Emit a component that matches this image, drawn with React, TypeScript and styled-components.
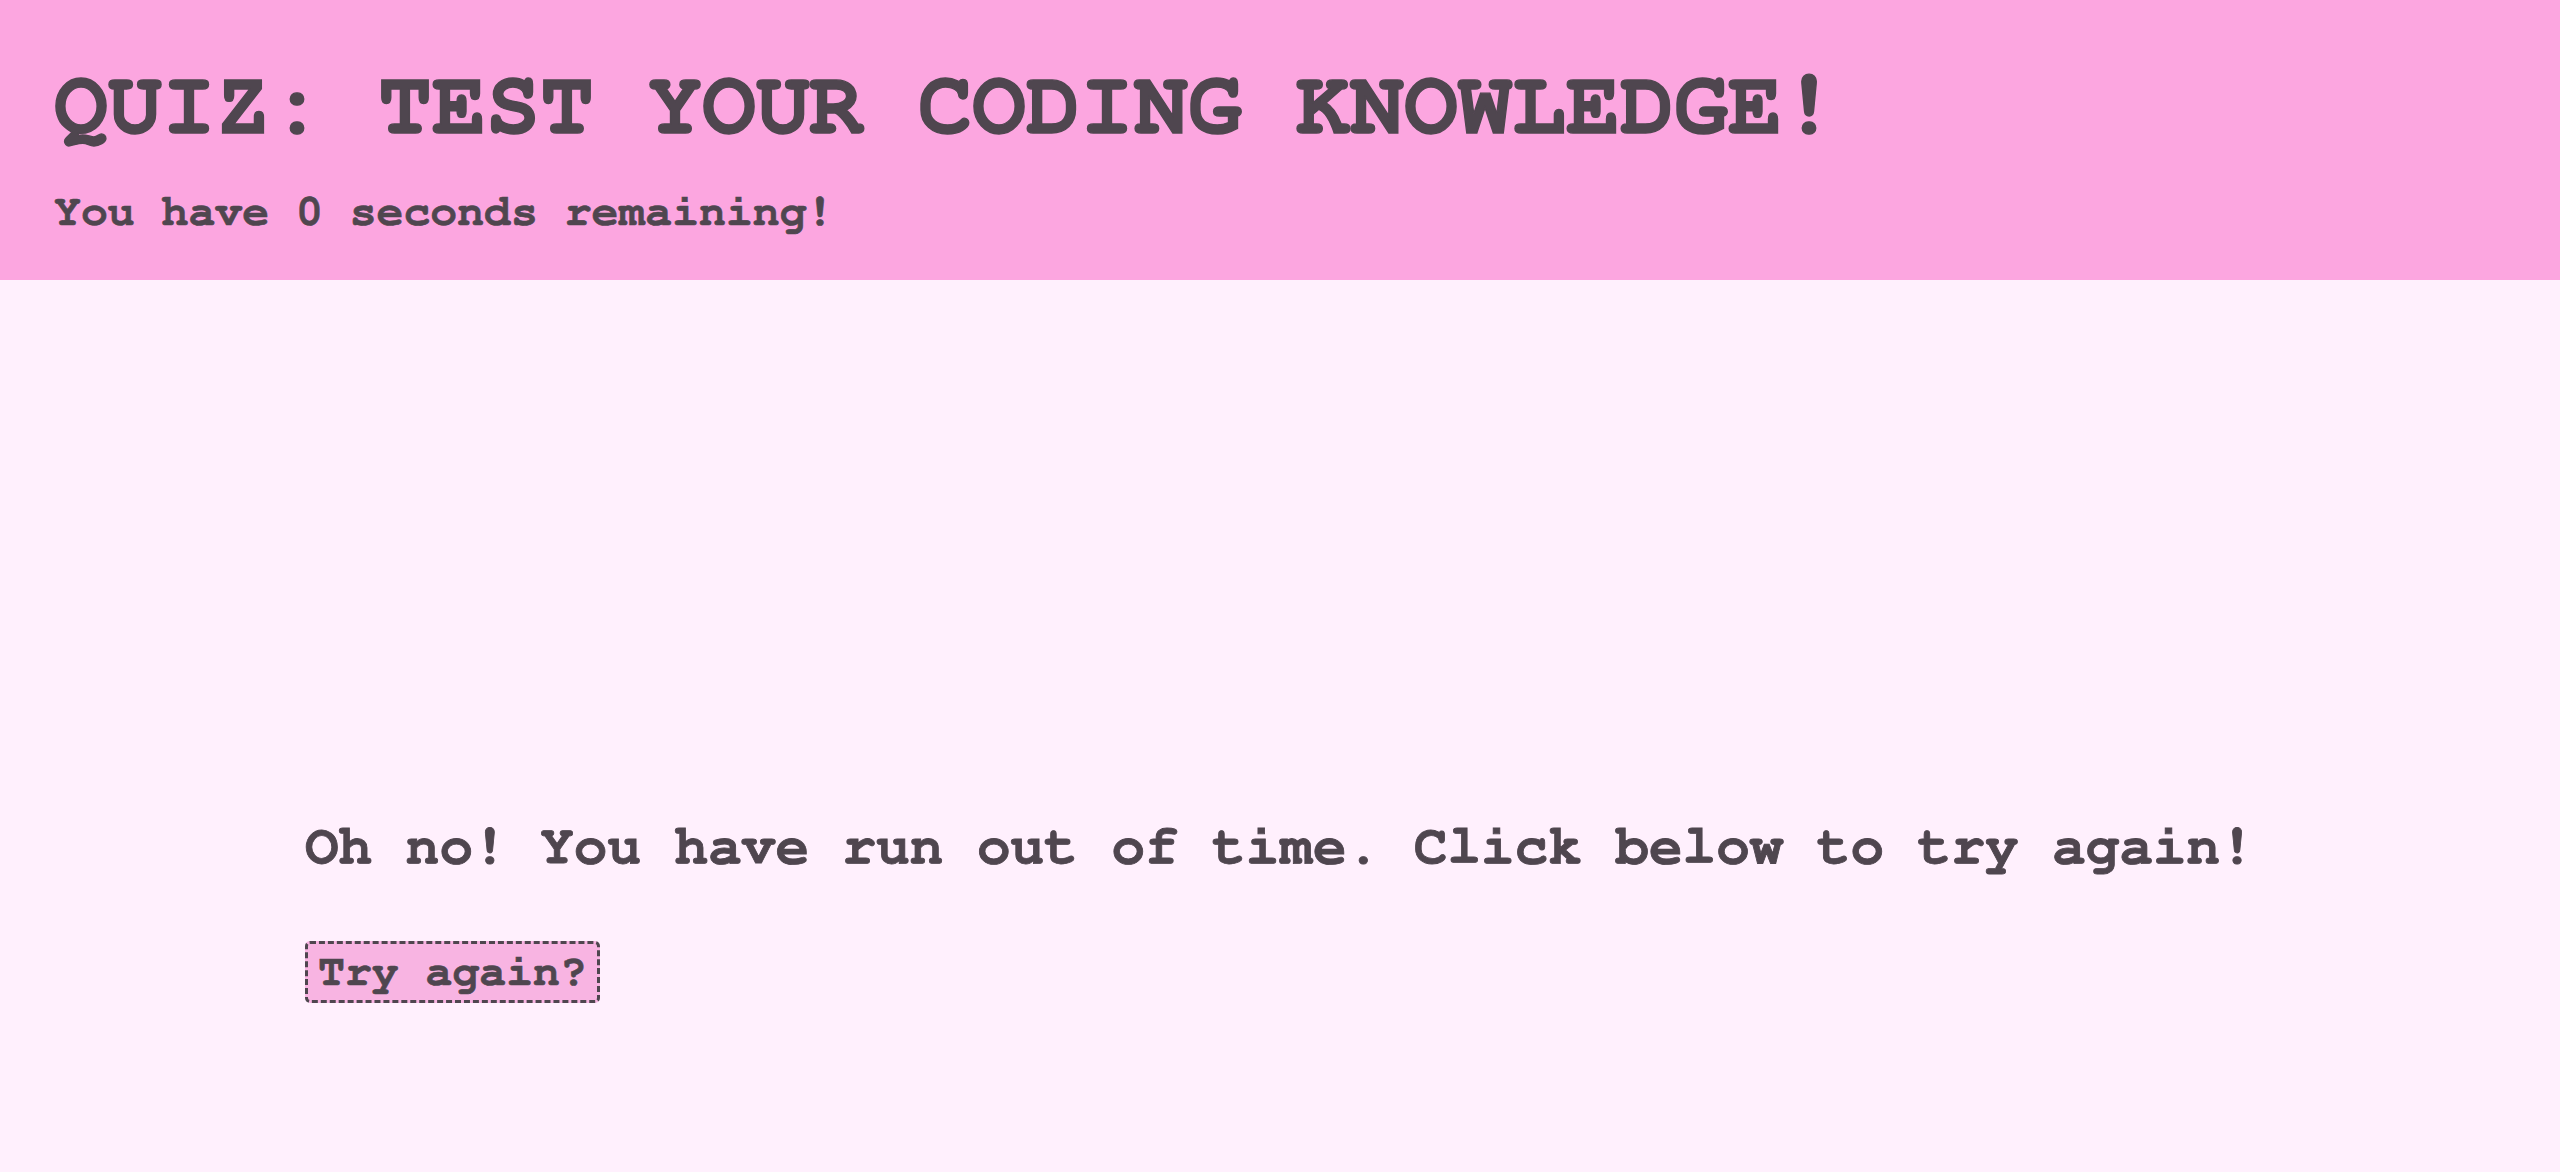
import React from "react";
import styled, { createGlobalStyle, css } from "styled-components";

const GlobalStyle = createGlobalStyle`
  html, body {
    margin: 0;
    padding: 0;
    background: #fff0fd;
    font-family: "FreeMono", "Courier New", monospace;
    color: #4f464f;
  }
`;

const heavy = css`
  font-weight: 700;
  -webkit-text-stroke: 0.015em currentColor;
`;

const Page = styled.div`
  min-height: 1172px;
  display: flex;
  flex-direction: column;
  background: #fff0fd;
`;

const Header = styled.header`
  background: #fca6e0;
  height: 280px;
  box-sizing: border-box;
  padding: 61px 54px 0 54px;
  display: flex;
  flex-direction: column;
`;

const Title = styled.h1`
  margin: 0;
  font-size: 90px;
  line-height: normal;
  text-transform: uppercase;
  ${heavy}
`;

const Timer = styled.p`
  margin: 38px 0 0 0;
  font-size: 44.8px;
  line-height: normal;
  ${heavy}
`;

const Main = styled.main`
  padding: 538px 0 0 305px;
  display: flex;
  flex-direction: column;
  align-items: flex-start;
  gap: 67px;
`;

const Message = styled.p`
  margin: 0;
  font-size: 56px;
  line-height: normal;
  ${heavy}
`;

const RetryButton = styled.button`
  font-family: "FreeMono", "Courier New", monospace;
  font-size: 44.8px;
  line-height: normal;
  color: #4f464f;
  background: #f8b4e2;
  border: 3px dashed #4f464f;
  border-radius: 5px;
  padding: 5px 10px 6px 10px;
  cursor: pointer;
  ${heavy}
`;

export default function App() {
  return (
    <Page>
      <GlobalStyle />
      <Header>
        <Title>Quiz: Test your coding knowledge!</Title>
        <Timer>You have 0 seconds remaining!</Timer>
      </Header>
      <Main>
        <Message>Oh no! You have run out of time. Click below to try again!</Message>
        <RetryButton>Try again?</RetryButton>
      </Main>
    </Page>
  );
}
